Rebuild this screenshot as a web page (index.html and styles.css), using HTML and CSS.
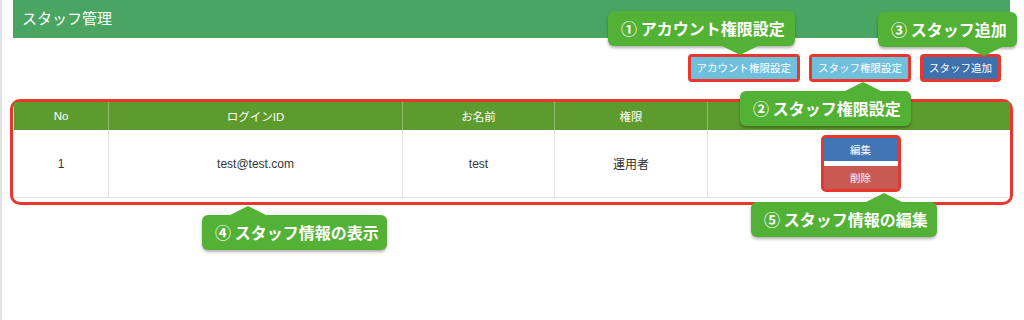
FILE: index.html
```html
<!DOCTYPE html>
<html lang="ja">

<head>
    <meta charset="UTF-8">
    <title>スタッフ管理</title>
    <link rel="stylesheet" href="styles.css">
</head>

<body>
    <div class="page">
        <div class="title-bar">スタッフ管理</div>

        <div class="toolbar">
            <span class="mark"><button class="btn btn-info">アカウント権限設定</button></span>
            <span class="mark"><button class="btn btn-info">スタッフ権限設定</button></span>
            <span class="mark"><button class="btn btn-primary">スタッフ追加</button></span>
        </div>

        <div class="table-mark">
            <table class="staff-table">
                <thead>
                    <tr>
                        <th class="col-no">No</th>
                        <th class="col-id">ログインID</th>
                        <th class="col-name">お名前</th>
                        <th class="col-role">権限</th>
                        <th class="col-action"></th>
                    </tr>
                </thead>
                <tbody>
                    <tr>
                        <td>1</td>
                        <td>test@test.com</td>
                        <td>test</td>
                        <td>運用者</td>
                        <td>
                            <div class="action-mark">
                                <button class="btn-row btn-edit">編集</button>
                                <button class="btn-row btn-delete">削除</button>
                            </div>
                        </td>
                    </tr>
                </tbody>
            </table>
        </div>

        <!-- annotations -->
        <div class="callout down c1">① アカウント権限設定</div>
        <div class="callout down c3">③ スタッフ追加</div>
        <div class="callout up c2">② スタッフ権限設定</div>
        <div class="callout up c4">④ スタッフ情報の表示</div>
        <div class="callout up c5">⑤ スタッフ情報の編集</div>
    </div>
</body>

</html>
```

FILE: styles.css
```css
body {
    margin: 0;
    padding: 0;
    background-color: #fff;
    font-family: "Liberation Sans", "Noto Sans CJK JP", sans-serif;
    color: #333;
}

.page {
    position: relative;
    height: 320px;
    border-left: 2px solid #e2e2e2;
    box-sizing: border-box;
    overflow: hidden;
}

.title-bar {
    margin-left: 11px;
    width: 997px;
    height: 38px;
    box-sizing: border-box;
    padding: 8px 0 0 9px;
    background-color: #4aa462;
    color: #fff;
    font-family: "Noto Sans CJK JP", sans-serif;
    font-size: 15px;
    line-height: 20px;
}

/* Buttons */
.toolbar {
    display: flex;
    justify-content: flex-end;
    gap: 9px;
    width: 999px;
    margin-top: 16px;
}

.mark {
    display: block;
    border: 3px solid #e8372c;
    border-radius: 4px;
}

.btn {
    display: block;
    height: 22px;
    padding: 0 6px;
    border: none;
    color: #fff;
    font-family: "Noto Sans CJK JP", sans-serif;
    font-size: 10.5px;
    line-height: 22px;
}

.btn-info {
    background-color: #6fc0dd;
}

.btn-primary {
    background-color: #3e72ad;
}

/* Table */
.table-mark {
    margin: 17px 0 0 8px;
    width: 1003px;
    box-sizing: border-box;
    border: 3px solid #e8372c;
    border-radius: 10px;
    padding: 0 0 4px 1px;
}

.staff-table {
    width: 996px;
    border-collapse: collapse;
    table-layout: fixed;
    font-size: 12px;
}

.staff-table th {
    height: 28px;
    padding: 0;
    background-color: #5e9b2e;
    color: #fff;
    font-size: 11.5px;
    font-weight: normal;
    border-left: 1px solid #8fb872;
}

.staff-table th:first-child {
    border-left: none;
}

.staff-table td {
    height: 67px;
    padding: 0;
    text-align: center;
    border-left: 1px solid #e2e2e2;
    border-bottom: 1px solid #e2e2e2;
}

.staff-table td:first-child {
    border-left: none;
}

.col-no { width: 94px; }
.col-id { width: 293px; }
.col-name { width: 151px; }
.col-role { width: 152px; }

.action-mark {
    display: inline-flex;
    flex-direction: column;
    gap: 5px;
    width: 74px;
    border: 3px solid #e8372c;
    border-radius: 5px;
    vertical-align: middle;
    margin-left: 3px;
}

.btn-row {
    display: block;
    height: 23px;
    border: none;
    color: #fff;
    font-family: "Noto Sans CJK JP", sans-serif;
    font-size: 10.5px;
}

.btn-edit {
    background-color: #4175b4;
}

.btn-delete {
    background-color: #c85a53;
}

/* Annotations */
.callout {
    position: absolute;
    height: 35px;
    box-sizing: border-box;
    padding-left: 13px;
    background-color: #53b136;
    color: #fff;
    border-radius: 6px;
    box-shadow: 0 2px 3px rgba(0, 0, 0, 0.3);
    font-family: "Noto Sans CJK JP", sans-serif;
    font-size: 16px;
    font-weight: bold;
    line-height: 35px;
    white-space: nowrap;
}

.callout::after {
    content: "";
    position: absolute;
    border-left: 18px solid transparent;
    border-right: 18px solid transparent;
}

.callout.down::after {
    top: 100%;
    border-top: 9px solid #53b136;
}

.callout.up::after {
    bottom: 100%;
    border-bottom: 9px solid #53b136;
}

.c1 { left: 606px; top: 11px; width: 187px; }
.c1::after { left: 114px; }

.c3 { left: 876px; top: 12px; width: 139px; }
.c3::after { left: 88px; }

.c2 { left: 738px; top: 91px; width: 171px; }
.c2::after { left: 105px; }

.c4 { left: 200px; top: 215px; width: 185px; }
.c4::after { left: 28px; }

.c5 { left: 749px; top: 202px; width: 186px; }
.c5::after { left: 115px; }
```
